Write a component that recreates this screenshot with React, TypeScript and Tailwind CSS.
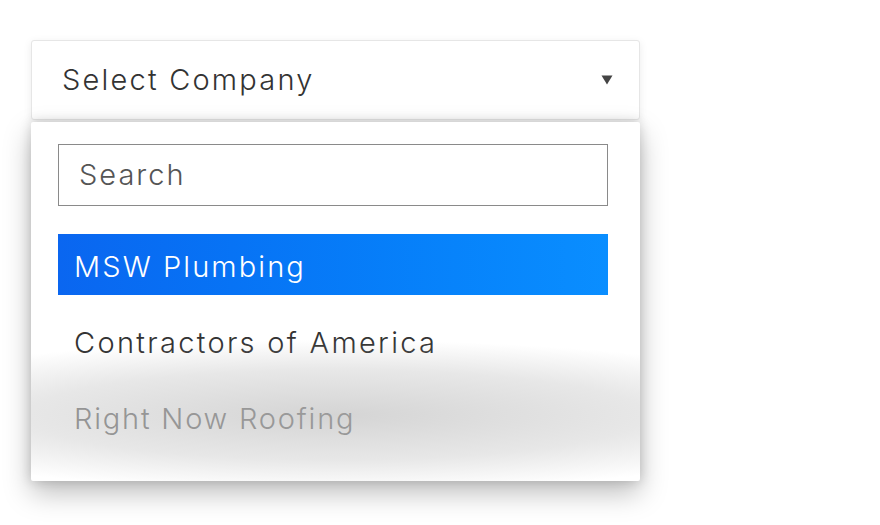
import React from 'react'

const items = [
  { label: 'MSW Plumbing', tone: 'active' },
  { label: 'Contractors of America', tone: 'normal' },
  { label: 'Right Now Roofing', tone: 'faded' },
]

const App = () => {
  return (
    <div className="w-[880px] h-[525px] bg-white overflow-hidden font-['Inter',sans-serif] font-light">
      <div className="pl-[31px] pt-[40px] w-[640px]">
        <div className="flex items-center justify-between h-[80px] pl-[30px] pr-[26px] bg-white border border-[#e6e6e6] rounded-[3px] shadow-[0_2px_8px_rgba(0,0,0,0.08)]">
          <span className="text-[29px] text-[#333] tracking-[2.2px]">Select Company</span>
          <svg width="12" height="10" viewBox="0 0 12 10">
            <path d="M0.5 0.5 H11.5 L6 9.5 Z" fill="#444" />
          </svg>
        </div>
        <div className="relative mt-[2px] h-[359px] bg-white rounded-[2px] shadow-[0_12px_28px_rgba(0,0,0,0.26),0_0_12px_rgba(0,0,0,0.16)] pl-[27px] pr-[32px] pt-[22px] overflow-hidden">
          <div className="h-[62px] border border-[#8a8a8a] flex items-center pl-[20px] text-[29px] tracking-[2px] text-[#555]">
            Search
          </div>
          <div className="mt-[28px] flex flex-col gap-[15px]">
            {items.map((it) => (
              <div
                key={it.label}
                className={
                  it.tone === 'active'
                    ? 'h-[61px] flex items-center pl-[16px] pt-[4px] text-[29px] tracking-[2.1px] text-white bg-gradient-to-r from-[#0a66f0] to-[#0a8eff]'
                    : it.tone === 'normal'
                      ? 'h-[61px] flex items-center pl-[16px] pt-[4px] text-[29px] tracking-[2.3px] text-[#333]'
                      : 'h-[61px] flex items-center pl-[16px] pt-[4px] text-[29px] tracking-[1.8px] text-[#8a8a8a]'
                }
              >
                {it.label}
              </div>
            ))}
          </div>
          <div className="pointer-events-none absolute left-0 right-0 bottom-0 h-[150px] bg-[radial-gradient(ellipse_85%_50%_at_50%_56%,rgba(170,170,170,0.5),rgba(170,170,170,0.28)_60%,rgba(170,170,170,0))]" />
        </div>
      </div>
    </div>
  )
}

export default App
